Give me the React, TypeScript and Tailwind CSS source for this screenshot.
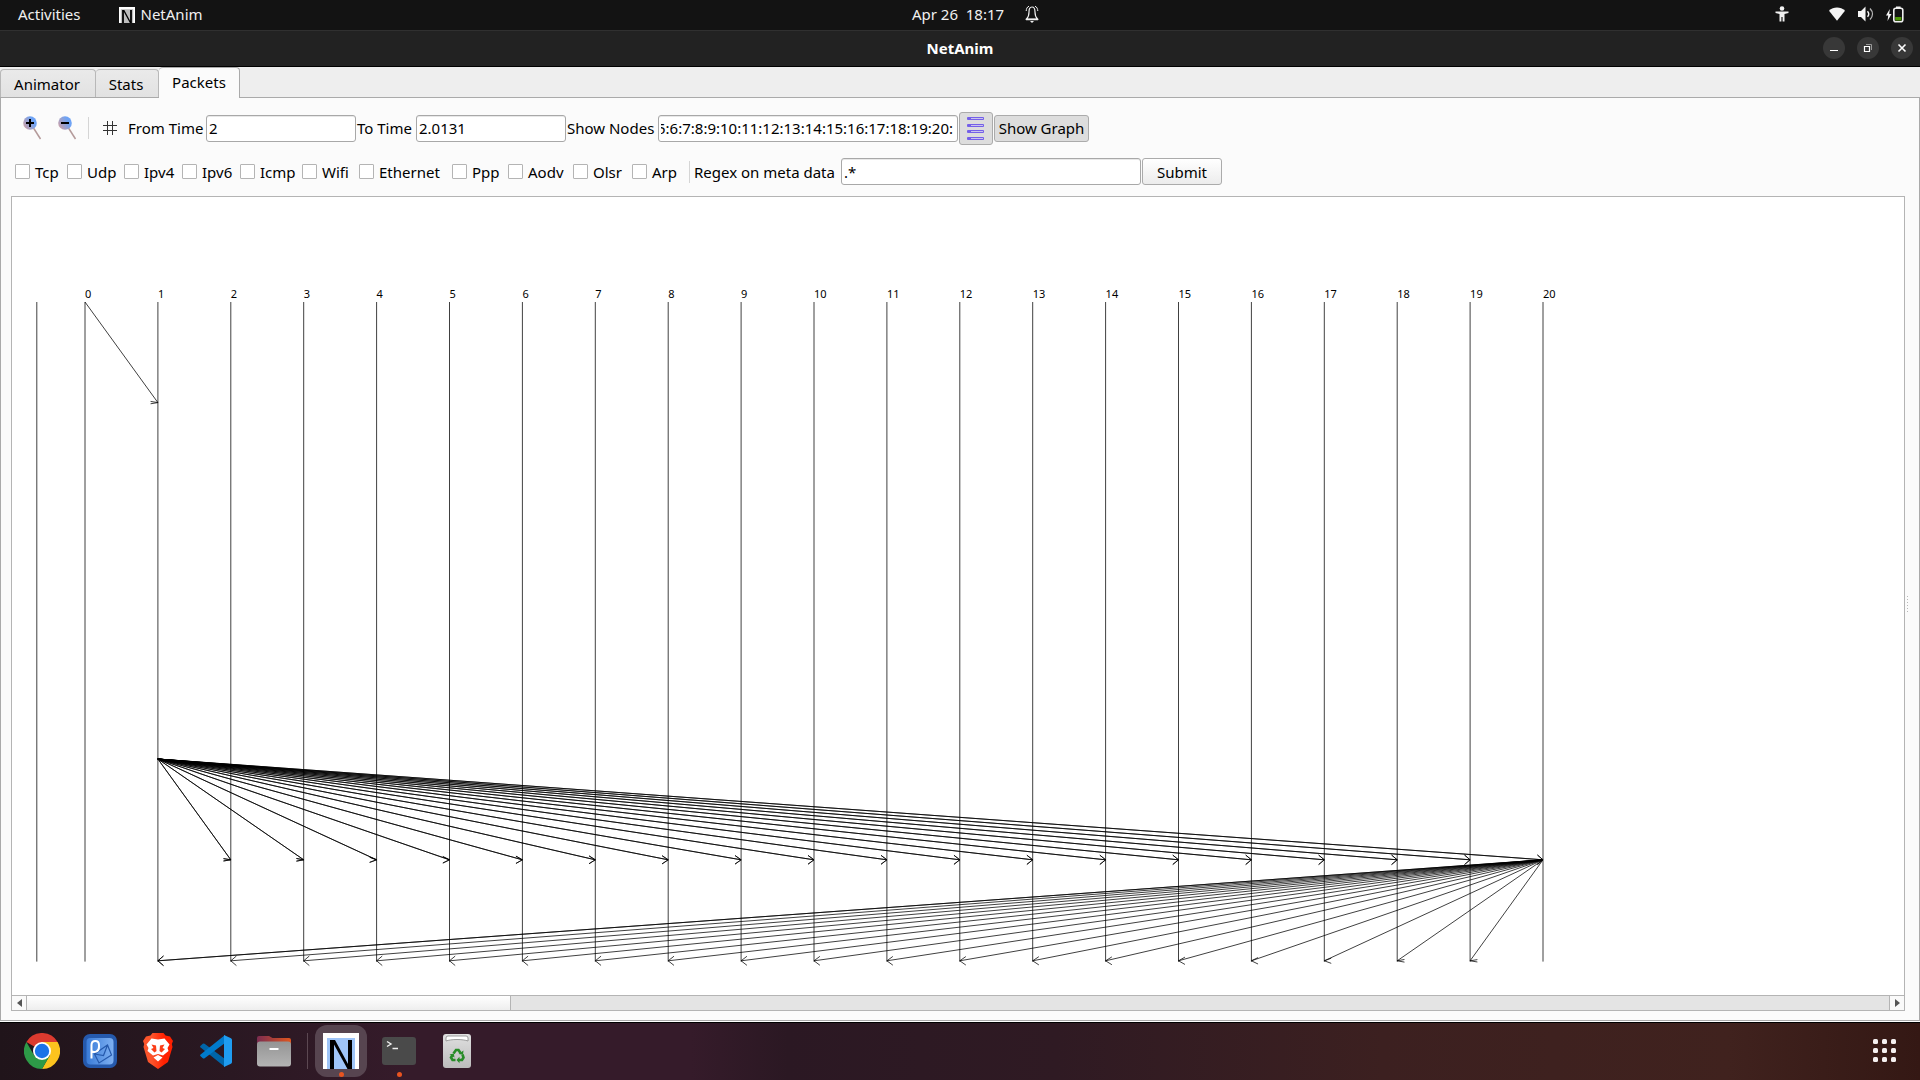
import { useEffect, useRef } from "react";
import type { ReactNode } from "react";

const FIRST_X = 73;
const STEP = 72.9;
const TOP = 105;
const BOTTOM = 764.6;
const WING = 7.4;

const nodes = Array.from({ length: 21 }, (_, i) => i);
const nodeX = (n: number) => FIRST_X + STEP * n;

type Packet = { from: number; to: number; y1: number; y2: number; times: number };

const packets: Packet[] = [
  { from: 0, to: 1, y1: 105, y2: 205.6, times: 1 },
  ...nodes.slice(2).map((n) => ({ from: 1, to: n, y1: 562, y2: 662.8, times: 2 })),
  ...nodes.slice(1, 20).map((n) => ({ from: 20, to: n, y1: 662.8, y2: 763.8, times: n === 1 ? 2 : 1 })),
];

function packetPath(p: Packet) {
  const x1 = nodeX(p.from);
  const x2 = nodeX(p.to);
  const back = x2 > x1 ? -1 : 1;
  const half = Math.PI / 4 - Math.atan2(p.y2 - p.y1, Math.abs(x2 - x1));
  const wx = x2 + back * WING * Math.cos(half);
  const wy = WING * Math.sin(half);
  return `M${x1} ${p.y1}L${x2} ${p.y2}M${wx} ${p.y2 - wy}L${x2} ${p.y2}L${wx} ${p.y2 + wy}`;
}

function PacketGraph() {
  return (
    <svg className="block h-full w-full" role="img" aria-label="Packet timeline">
      <g stroke="#000" strokeWidth="0.75" fill="none">
        <path d={`M24.8 ${TOP}V${BOTTOM}`} />
        {nodes.map((n) => (
          <path key={n} d={`M${nodeX(n)} ${TOP}V${BOTTOM}`} />
        ))}
        {packets.flatMap((p) =>
          Array.from({ length: p.times }, (_, k) => (
            <path key={`${p.from}-${p.to}-${k}`} d={packetPath(p)} />
          )),
        )}
      </g>
      <g fontSize="11" fill="#000">
        {nodes.map((n) => (
          <text key={n} x={nodeX(n)} y="101">
            {n}
          </text>
        ))}
      </g>
    </svg>
  );
}

function NetAnimMark({ className, fill }: { className: string; fill: string }) {
  return (
    <svg viewBox="0 0 36 36" className={className} aria-hidden="true">
      <path fill="#fff" d="M0 0h36v36H0z" />
      <path fill={fill} d="M4 5h28v31H4z" />
      <path fill="#000" d="M7 7h5l13 24V7h4v29h-4.500L11 11.500V36H7z" />
    </svg>
  );
}

function TopBar() {
  return (
    <header className="grid h-[31px] grid-cols-3 items-center border-b border-[#303030] bg-[#131313] pb-0.5 text-[#f0f0f0]">
      <div className="flex items-center pl-[18px]">
        <button type="button">Activities</button>
        <button type="button" className="ml-[38px] flex items-center gap-1.5">
          <NetAnimMark className="mt-0.5 h-4 w-4" fill="#bdbdbd" />
          NetAnim
        </button>
      </div>
      <div className="flex items-center justify-center gap-5 pl-8">
        <button type="button" className="whitespace-pre">Apr 26  18:17</button>
        <svg viewBox="0 0 16 18" className="h-[18px] w-4" fill="none" stroke="#f0f0f0" aria-hidden="true">
          <path d="M8 2C5.500 2 5 4.500 5 7c0 4-.8 5.500-2.500 7h11C11.800 12.500 11 11 11 7c0-2.500-.5-5-3-5z" strokeWidth="1.200" />
          <path d="M5 1.200C3 2 2.300 4 2.200 6M11 1.200c2 .8 2.700 2.800 2.800 4.800" strokeWidth="1" />
          <path d="M2 14.500h12" strokeWidth="1.500" />
          <path d="M6 16h4l-2 2z" fill="#f0f0f0" stroke="none" />
        </svg>
      </div>
      <div className="flex items-center justify-end pr-4">
        <svg viewBox="0 0 14 16" className="mr-10 h-4 w-3.5" fill="#f0f0f0" aria-hidden="true">
          <circle cx="7" cy="2.500" r="2.300" />
          <path d="M.5 5.500h13v1.600L9.500 8v7.500H7.600V11H6.400v4.500H4.500V8L.5 7.100z" />
        </svg>
        <svg viewBox="0 0 16 14" className="mr-[13px] h-3.5 w-4" fill="#f5f5f5" aria-hidden="true">
          <path d="M8 13.800 0 3.800C4.500-.6 11.500-.6 16 3.800z" />
        </svg>
        <svg viewBox="0 0 16 16" className="mr-3 h-4 w-4" aria-hidden="true">
          <path fill="#f5f5f5" d="M0 5h3l4.500-4.500v15L3 11H0z" />
          <path fill="none" stroke="#f5f5f5" strokeWidth="1.400" d="M9.500 5.200c1.500 1.700 1.500 3.900 0 5.600" />
          <path fill="none" stroke="#b5b5b5" strokeWidth="1.400" d="M12 2.500c3.200 3.300 3.200 7.700 0 11" />
        </svg>
        <svg viewBox="0 0 18 17" className="h-[17px] w-[18px]" aria-hidden="true">
          <path fill="#f5f5f5" d="M3.800 3 0 9.500h2.200L1.500 15 5.500 8H3.200z" />
          <rect x="7.800" y="2.300" width="9" height="13.400" rx="2" fill="none" stroke="#f0f0f0" strokeWidth="1.600" />
          <path fill="#f5f5f5" d="M10 .5h4.600V2H10z" />
          <path fill="#4e9a06" d="M9.200 11h6.200v3.500H9.200z" />
        </svg>
      </div>
    </header>
  );
}

function WindowButton({ label, children }: { label: string; children: ReactNode }) {
  return (
    <button type="button" aria-label={label} className="flex h-[22px] w-[22px] items-center justify-center rounded-full bg-[#383838]">
      <svg viewBox="0 0 10 10" className="h-2.5 w-2.5" fill="none" stroke="#fff" aria-hidden="true">
        {children}
      </svg>
    </button>
  );
}

function TitleBar() {
  return (
    <div className="grid h-9 grid-cols-3 items-center border-b border-black bg-[#222222] pb-0.5 text-white">
      <h1 className="col-start-2 text-center font-bold">NetAnim</h1>
      <div className="flex justify-end gap-3 pr-[7px]">
        <WindowButton label="Minimize">
          <path d="M1 7.500h8" />
        </WindowButton>
        <WindowButton label="Restore">
          <path d="M1.500 3.500h5v5h-5z" strokeWidth="1.200" />
          <path d="M3 1.500h5.500V7" stroke="#999" />
        </WindowButton>
        <WindowButton label="Close">
          <path d="m1.500 1.500 7 7m0-7-7 7" strokeWidth="1.600" />
        </WindowButton>
      </div>
    </div>
  );
}

function Tabs() {
  return (
    <div role="tablist" className="flex h-[30px] items-end bg-[#eeeeee]">
      <button role="tab" aria-selected="false" type="button" className="h-7 w-24 rounded-t-sm border border-b-0 border-[#b8b8b8] bg-linear-to-b from-[#eaeaea] to-[#e2e2e2] pr-0.5">
        Animator
      </button>
      <button role="tab" aria-selected="false" type="button" className="h-7 w-[63px] rounded-t-sm border border-b-0 border-l-0 border-[#b8b8b8] bg-linear-to-b from-[#eaeaea] to-[#e2e2e2] pr-0.5">
        Stats
      </button>
      <button role="tab" aria-selected="true" type="button" className="z-10 -mb-px h-[31px] w-[81px] rounded-t-sm border border-b-0 border-l-0 border-[#aaaaaa] bg-[#fbfbfb] pb-0.5">
        Packets
      </button>
    </div>
  );
}

function Magnifier({ sign }: { sign: string }) {
  return (
    <svg viewBox="0 0 20 26" className="h-[26px] w-5" aria-hidden="true">
      <defs>
        <linearGradient id="lens" x1="1" y1="0" x2="0" y2="0.600">
          <stop offset="0.350" stopColor="#6ea3f5" />
          <stop offset="1" stopColor="#c3a0ae" />
        </linearGradient>
      </defs>
      <path d="m11.500 13 7 11" stroke="#b49a9a" strokeWidth="1.500" />
      <circle cx="8" cy="8" r="6.800" fill="url(#lens)" />
      <path d={sign} stroke="#000" strokeWidth="2" />
    </svg>
  );
}

const field = "h-[27px] rounded-[3px] border border-[#a8a8a8] bg-white pl-0.5 pr-1 shadow-[inset_0_1px_0_#e8e8e8] outline-none";

function NodesInput() {
  const ref = useRef<HTMLInputElement>(null);
  useEffect(() => {
    if (ref.current) ref.current.scrollLeft = ref.current.scrollWidth;
  }, []);
  return (
    <input
      ref={ref}
      id="nodes"
      className={`${field} w-[300px]`}
      defaultValue={nodes.map((n) => `${n}:`).join("")}
    />
  );
}

function TimeToolbar() {
  return (
    <div className="flex h-[34px] items-center">
      <button type="button" aria-label="Zoom in" className="ml-[11px]">
        <Magnifier sign="M4 8h8M8 4v8" />
      </button>
      <button type="button" aria-label="Zoom out" className="ml-[15px]">
        <Magnifier sign="M4 8h8" />
      </button>
      <div className="ml-[11px] h-[22px] w-px bg-[#d5d5d5]" />
      <button type="button" aria-label="Grid" className="ml-3.5">
        <svg viewBox="0 0 14 14" className="h-3.5 w-3.5" stroke="#333" aria-hidden="true">
          <path d="M0 4.500h14M0 9.500h14M4.500 0v14M9.500 0v14" />
        </svg>
      </button>
      <label htmlFor="from" className="ml-[11px] w-[78px]">From Time</label>
      <input id="from" className={`${field} w-[150px]`} defaultValue="2" />
      <label htmlFor="to" className="ml-px w-[59px]">To Time</label>
      <input id="to" className={`${field} w-[150px]`} defaultValue="2.0131" />
      <label htmlFor="nodes" className="ml-px w-[91px]">Show Nodes</label>
      <NodesInput />
      <button type="button" aria-label="Show table" className="ml-px flex h-[33px] w-[34px] items-center justify-center rounded-[3px] border border-[#ababab] bg-[#dddddd]">
        <svg viewBox="0 0 18 24" className="h-6 w-[18px]" fill="#c9c3ee" stroke="#7560e8" aria-hidden="true">
          <path d="M.5 1.500h16v2H.5zM.5 8.500h16v2H.5zM.5 14.500h16v2H.5zM.5 21.500h16v2H.5z" />
          <path d="M1 2.500h3M1 9.500h3M1 15.500h3M1 22.500h3" />
        </svg>
      </button>
      <button type="button" className="ml-px h-[27px] w-[95px] rounded-[3px] border border-[#ababab] bg-[#dddddd]">
        Show Graph
      </button>
    </div>
  );
}

const protocols = [
  { name: "Tcp", width: "w-[52px]" },
  { name: "Udp", width: "w-[57px]" },
  { name: "Ipv4", width: "w-[58px]" },
  { name: "Ipv6", width: "w-[58px]" },
  { name: "Icmp", width: "w-[62px]" },
  { name: "Wifi", width: "w-[57px]" },
  { name: "Ethernet", width: "w-[93px]" },
  { name: "Ppp", width: "w-[56px]" },
  { name: "Aodv", width: "w-[65px]" },
  { name: "Olsr", width: "w-[59px]" },
  { name: "Arp", width: "w-[57px]" },
];

function FilterToolbar() {
  return (
    <div className="flex h-[27px] items-center pl-1">
      {protocols.map(({ name, width }) => (
        <label key={name} className={`flex items-center gap-[5px] whitespace-nowrap ${width}`}>
          <input type="checkbox" className="h-[15px] w-[15px] shrink-0 appearance-none rounded-[1px] border border-[#b4b4b4] bg-white checked:bg-[#7560e8]" />
          {name}
        </label>
      ))}
      <div className="h-[22px] w-px bg-[#d5d5d5]" />
      <label htmlFor="regex" className="ml-1 w-[147px] whitespace-nowrap">Regex on meta data</label>
      <input id="regex" className={`${field} w-[300px]`} defaultValue=".*" />
      <button type="button" className="ml-px h-[27px] w-20 rounded-[3px] border border-[#ababab] bg-linear-to-b from-white to-[#ececec]">
        Submit
      </button>
    </div>
  );
}

function ScrollBar() {
  return (
    <div className="flex h-[15px] border-t border-[#b4b4b4] bg-[#e4e4e4]">
      <button type="button" aria-label="Scroll left" className="flex w-[15px] items-center justify-center border-r border-[#b4b4b4] bg-[#fafafa]">
        <svg viewBox="0 0 5 8" className="h-2 w-[5px]" fill="#555" aria-hidden="true">
          <path d="M5 0v8L0 4z" />
        </svg>
      </button>
      <div className="flex-1">
        <div className="h-full w-[26%] border-r border-[#b4b4b4] bg-linear-to-b from-white to-[#eeeeee]" />
      </div>
      <button type="button" aria-label="Scroll right" className="flex w-[15px] items-center justify-center border-l border-[#b4b4b4] bg-[#fafafa]">
        <svg viewBox="0 0 5 8" className="h-2 w-[5px]" fill="#555" aria-hidden="true">
          <path d="M0 0v8l5-4z" />
        </svg>
      </button>
    </div>
  );
}

function DockItem({ label, children, active, running }: { label: string; children: ReactNode; active?: boolean; running?: boolean }) {
  return (
    <button type="button" aria-label={label} className="relative flex h-[52px] w-[58px] items-center justify-center">
      <span className={`flex h-[52px] w-[52px] items-center justify-center rounded-xl ${active ? "bg-[#574550]" : ""}`}>{children}</span>
      {running && <span className="absolute bottom-0 h-[5px] w-[5px] rounded-full bg-[#e95420]" />}
    </button>
  );
}

function Dock() {
  return (
    <footer className="flex h-[58px] items-center border-t border-black bg-[linear-gradient(90deg,#20141a_0%,#2a1822_12%,#351b2a_21%,#351b2a_36%,#2b1823_41%,#2f1a23_55%,#3c2020_72%,#40221e_90%,#341814_100%)] pr-6 pb-0.5 pl-[13px]">
      <DockItem label="Chrome">
        <svg viewBox="0 0 36 36" className="h-9 w-9" aria-hidden="true">
          <path fill="#db3a2f" d="M18 18 2.400 9A18 18 0 0 1 33.600 9z" />
          <path fill="#fcc31e" d="M18 9h15.600A18 18 0 0 1 18 36l8-14z" />
          <path fill="#2d9a47" d="M2.400 9A18 18 0 0 0 18 36l7.800-13.500L18 27l-7.800-4.500z" />
          <circle cx="18" cy="18" r="9" fill="#fff" />
          <circle cx="18" cy="18" r="7.200" fill="#1b73e8" />
        </svg>
      </DockItem>
      <DockItem label="Mail">
        <svg viewBox="0 0 34 34" className="h-[34px] w-[34px]" aria-hidden="true">
          <defs>
            <linearGradient id="mail" x1="0" y1="0" x2="1" y2="0">
              <stop offset="0" stopColor="#3a7cd8" />
              <stop offset="1" stopColor="#7eb0f2" />
            </linearGradient>
          </defs>
          <rect width="34" height="34" rx="7" fill="#2559ac" />
          <rect x="3.500" y="4" width="27" height="26.500" rx="4" fill="url(#mail)" />
          <path d="m11.500 20 13-9 4 10-12.500 8zM11.500 20l9 1.500 4-10.500" fill="none" stroke="#2559ac" strokeWidth="1.200" />
          <path d="M8.500 24.500V11c0-5.500 7.500-5.500 7.500 0v2c0 5-5 6-7.500 4" fill="none" stroke="#fff" strokeWidth="2" />
        </svg>
      </DockItem>
      <DockItem label="Brave">
        <svg viewBox="0 0 30 36" className="h-9 w-[30px]" aria-hidden="true">
          <defs>
            <linearGradient id="brave" x1="0" y1="0" x2="1" y2="0">
              <stop offset="0.300" stopColor="#fb542b" />
              <stop offset="0.700" stopColor="#ff2000" />
            </linearGradient>
          </defs>
          <path fill="url(#brave)" d="m9.500 0-2 2.500L3 3.500 0 8l1.200 3L.5 14l4.500 15 10 7 10-7 4.500-15-.7-3L30 8l-3-4.500-4.500-1L20.500 0z" />
          <path fill="#fff" d="m15 6.500 6.500-1 5 6-2 3.500 1 3-5.500 4.500-5-1.500-5 1.500L4.500 18l1-3-2-3.500 5-6z" />
          <path fill="#fb3d17" d="m8.500 11.500 4.500 1 .5 5.500-2 1.500L8 16l2.500-1zM21.500 11.500l-4.500 1-.5 5.500 2 1.500L22 16l-2.500-1z" />
          <path fill="#fff" d="m15 22 4.500 2.500L15 28.500l-4.500-4z" />
        </svg>
      </DockItem>
      <DockItem label="Visual Studio Code">
        <svg viewBox="0 0 32 32" className="h-8 w-8" aria-hidden="true">
          <path fill="#0065a9" d="M.6 10.800 2.800 8.800a1.500 1.500 0 0 1 1.800 0L25 24v8L.6 12.600a1.200 1.200 0 0 1 0-1.800z" />
          <path fill="#007acc" d="M.6 21.200l2.200 2a1.500 1.500 0 0 0 1.800 0L25 8V0L.6 19.400a1.200 1.200 0 0 0 0 1.800z" />
          <path fill="#1f9cf0" d="m24 0 7 3.300c.6.300 1 .9 1 1.600v22.200c0 .7-.4 1.300-1 1.600L24 32z" />
        </svg>
      </DockItem>
      <DockItem label="Files">
        <svg viewBox="0 0 34 32" className="h-8 w-[34px]" aria-hidden="true">
          <defs>
            <linearGradient id="folder" x1="0" y1="0" x2="1" y2="0">
              <stop offset="0" stopColor="#7b2c50" />
              <stop offset="1" stopColor="#e0561f" />
            </linearGradient>
            <linearGradient id="drawer" x1="0" y1="0" x2="0" y2="1">
              <stop offset="0" stopColor="#949494" />
              <stop offset="1" stopColor="#b4b4b4" />
            </linearGradient>
          </defs>
          <path fill="url(#folder)" d="M0 3a2 2 0 0 1 2-2h10l3.500 2H32a2 2 0 0 1 2 2v6H0z" />
          <rect y="6.500" width="34" height="25" rx="3" fill="url(#drawer)" />
          <path d="M12.500 14h9" stroke="#fff" strokeWidth="2" />
        </svg>
      </DockItem>
      <div className="mx-1 h-9 w-px bg-[#5c4852]" />
      <DockItem label="NetAnim" active running>
        <NetAnimMark className="h-9 w-9" fill="#9fc5f8" />
      </DockItem>
      <DockItem label="Terminal" running>
        <svg viewBox="0 0 34 28" className="h-7 w-[34px]" aria-hidden="true">
          <rect width="34" height="28" rx="3" fill="#4a4a4a" />
          <path d="m5 4.500 4 2.500-4 2.500M10.500 11.500H16" fill="none" stroke="#f0f0f0" strokeWidth="1.400" />
        </svg>
      </DockItem>
      <DockItem label="Trash">
        <svg viewBox="0 0 28 34" className="h-[34px] w-7" aria-hidden="true">
          <defs>
            <linearGradient id="bin" x1="0" y1="0" x2="0" y2="1">
              <stop offset="0" stopColor="#e0e0e0" />
              <stop offset="1" stopColor="#bcbcbc" />
            </linearGradient>
          </defs>
          <rect width="28" height="34" rx="3" fill="url(#bin)" />
          <path d="M3 7V4a2 2 0 0 1 2-2h18a2 2 0 0 1 2 2v3c-5-2-17-2-22 0z" fill="#fff" stroke="#888" strokeWidth="0.800" />
          <g fill="none" stroke="#278c27" strokeWidth="2.600">
            <path d="m10.500 19.500 2.500-3.500h2.500l2 3" />
            <path d="m19.500 20.500 1 3-1.500 2.500h-3.500" />
            <path d="M12.500 26H9.500L8 23.500l1.500-2.500" />
          </g>
          <path fill="#278c27" d="m15.500 20 4.500.8.500-4.300zM16.500 22.800 13.500 26l3 3.200zM6.500 20.500l4.300-1 .7 4z" />
        </svg>
      </DockItem>
      <button type="button" aria-label="Show Applications" className="ml-auto">
        <svg viewBox="0 0 23 23" className="h-[23px] w-[23px]" fill="#f5f0f0" aria-hidden="true">
          {[0, 9, 18].flatMap((y) => [0, 9, 18].map((x) => <rect key={`${x}-${y}`} x={x} y={y} width="5" height="5" rx="1.500" />))}
        </svg>
      </button>
    </footer>
  );
}

export default function App() {
  return (
    <div className="flex h-screen flex-col overflow-hidden bg-white font-['Noto_Sans','Open_Sans',sans-serif] text-[15px] leading-5 text-black">
      <TopBar />
      <TitleBar />
      <Tabs />
      <main className="mb-px flex min-h-0 flex-1 flex-col border border-[#aaaaaa] bg-[#fbfbfb] pt-[13px] pb-[9px] pl-2.5">
        <TimeToolbar />
        <div className="mt-[13px]">
          <FilterToolbar />
        </div>
        <div className="mt-[11px] flex min-h-0 flex-1">
          <section className="flex min-w-0 flex-1 flex-col border border-[#b4b4b4] bg-white">
            <div className="min-h-0 flex-1 overflow-hidden">
              <PacketGraph />
            </div>
            <ScrollBar />
          </section>
          <div className="flex w-3.5 flex-col items-start justify-center gap-0.5 pl-0.5">
            {[0, 1, 2, 3, 4, 5].map((dot) => (
              <span key={dot} className="h-px w-px bg-[#b8b8b8]" />
            ))}
          </div>
        </div>
      </main>
      <Dock />
    </div>
  );
}
